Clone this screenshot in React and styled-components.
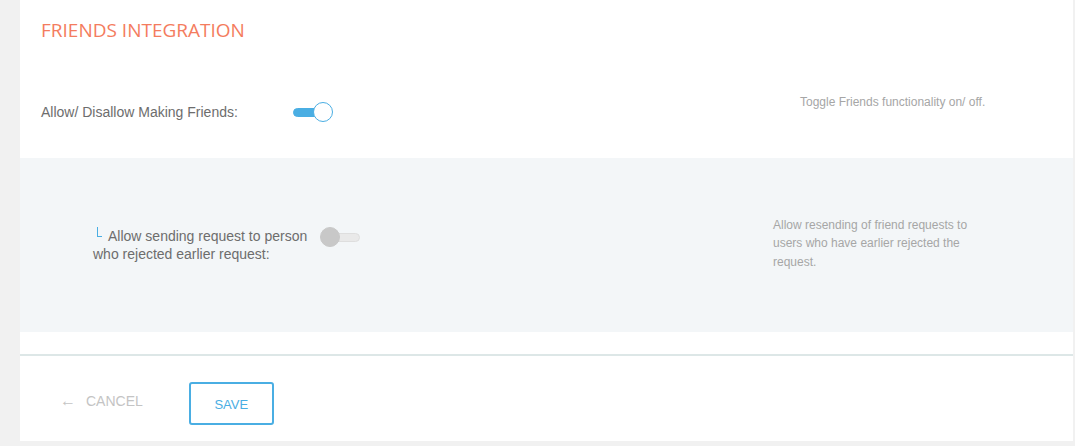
import React from "react";
import styled, { createGlobalStyle } from "styled-components";

const Global = createGlobalStyle`
  body {
    margin: 0;
    background: #f1f1f1;
    font-family: "Liberation Sans", Arial, sans-serif;
  }
`;

const Page = styled.div`
  padding-left: 20px;
  padding-right: 2px;
  height: 446px;
  box-sizing: border-box;
`;

const Card = styled.div`
  background: #ffffff;
  height: 441px;
  display: flex;
  flex-direction: column;
`;

const Title = styled.h2`
  margin: 0;
  padding: 17px 21px 0;
  height: 22px;
  line-height: 26px;
  font-family: "Open Sans", "Noto Sans", sans-serif;
  font-weight: 400;
  font-size: 19px;
  color: #f47c5e;
  text-transform: uppercase;
`;

const Row = styled.div`
  display: grid;
  grid-template-columns: ${(p) => p.$label}px ${(p) => p.$toggle}px 1fr;
  align-items: center;
  padding-left: ${(p) => p.$indent}px;
  height: ${(p) => p.$height}px;
  background: ${(p) => (p.$shaded ? "#f3f6f8" : "transparent")};
`;

const Label = styled.div`
  font-size: 14px;
  line-height: 18px;
  color: #6d6d6d;
  align-self: ${(p) => (p.$top ? "start" : "center")};
  padding-top: ${(p) => p.$top || 0}px;
`;

const Corner = styled.span`
  display: inline-block;
  width: 4px;
  height: 9px;
  border-left: 1px solid #4aaee3;
  border-bottom: 1px solid #4aaee3;
  margin: 0 6px 0 4px;
  vertical-align: 4px;
`;

const Desc = styled.div`
  font-size: 12px;
  line-height: 18.5px;
  color: #a6a6a6;
  width: 210px;
  align-self: ${(p) => (p.$top ? "start" : "center")};
  padding-top: ${(p) => p.$top || 0}px;
  margin-top: ${(p) => p.$nudge || 0}px;
`;

const SwitchCell = styled.div`
  align-self: start;
  padding-top: ${(p) => p.$top}px;
`;

const Switch = styled.div`
  position: relative;
  width: 40px;
  height: 20px;
`;

const Track = styled.div`
  position: absolute;
  top: 6px;
  left: ${(p) => (p.$on ? 0 : 8)}px;
  width: 32px;
  height: 9px;
  border-radius: 5px;
  box-sizing: border-box;
  background: ${(p) => (p.$on ? "#4aaee3" : "#e9e9e9")};
  border: 1px solid ${(p) => (p.$on ? "#4aaee3" : "#dedede")};
`;

const Knob = styled.div`
  position: absolute;
  top: 0;
  left: ${(p) => (p.$on ? 20 : 0)}px;
  width: 20px;
  height: 20px;
  border-radius: 50%;
  box-sizing: border-box;
  background: ${(p) => (p.$on ? "#ffffff" : "#c8c8c8")};
  border: 1px solid ${(p) => (p.$on ? "#4aaee3" : "#c8c8c8")};
`;

const Toggle = ({ on }) => (
  <Switch>
    <Track $on={on} />
    <Knob $on={on} />
  </Switch>
);

const Spacer = styled.div`
  height: 22px;
`;

const Footer = styled.div`
  border-top: 2px solid #dde7e7;
  display: flex;
  align-items: center;
  gap: 46px;
  padding: 26px 0 0 40px;
`;

const Cancel = styled.button`
  background: none;
  border: none;
  font-family: "Liberation Sans", Arial, sans-serif;
  font-size: 14px;
  color: #c4c4c4;
  display: flex;
  align-items: center;
  gap: 10px;
  padding: 0;
  margin-top: -6px;
  cursor: pointer;
`;

const Arrow = styled.span`
  font-size: 16px;
  color: #c4c4c4;
`;

const Save = styled.button`
  width: 85px;
  height: 43px;
  background: #ffffff;
  border: 2px solid #4aaee3;
  border-radius: 3px;
  font-family: "Liberation Sans", Arial, sans-serif;
  font-size: 13px;
  color: #4aaee3;
  padding-top: 2px;
  cursor: pointer;
`;

export default function App() {
  return (
    <>
      <Global />
      <Page>
        <Card>
          <Title>Friends Integration</Title>
          <Row $label={252} $toggle={507} $indent={21} $height={119}>
            <Label $top={64}>Allow/ Disallow Making Friends:</Label>
            <SwitchCell $top={63}>
              <Toggle on />
            </SwitchCell>
            <Desc $top={54}>Toggle Friends functionality on/ off.</Desc>
          </Row>
          <Row $shaded $label={227} $toggle={453} $indent={73} $height={174}>
            <Label>
              <Corner />
              Allow sending request to person
              <br />
              who rejected earlier request:
            </Label>
            <SwitchCell $top={69}>
              <Toggle on={false} />
            </SwitchCell>
            <Desc $nudge={-3}>
              Allow resending of friend requests to users who have earlier
              rejected the request.
            </Desc>
          </Row>
          <Spacer />
          <Footer>
            <Cancel>
              <Arrow>←</Arrow>CANCEL
            </Cancel>
            <Save>SAVE</Save>
          </Footer>
        </Card>
      </Page>
    </>
  );
}
